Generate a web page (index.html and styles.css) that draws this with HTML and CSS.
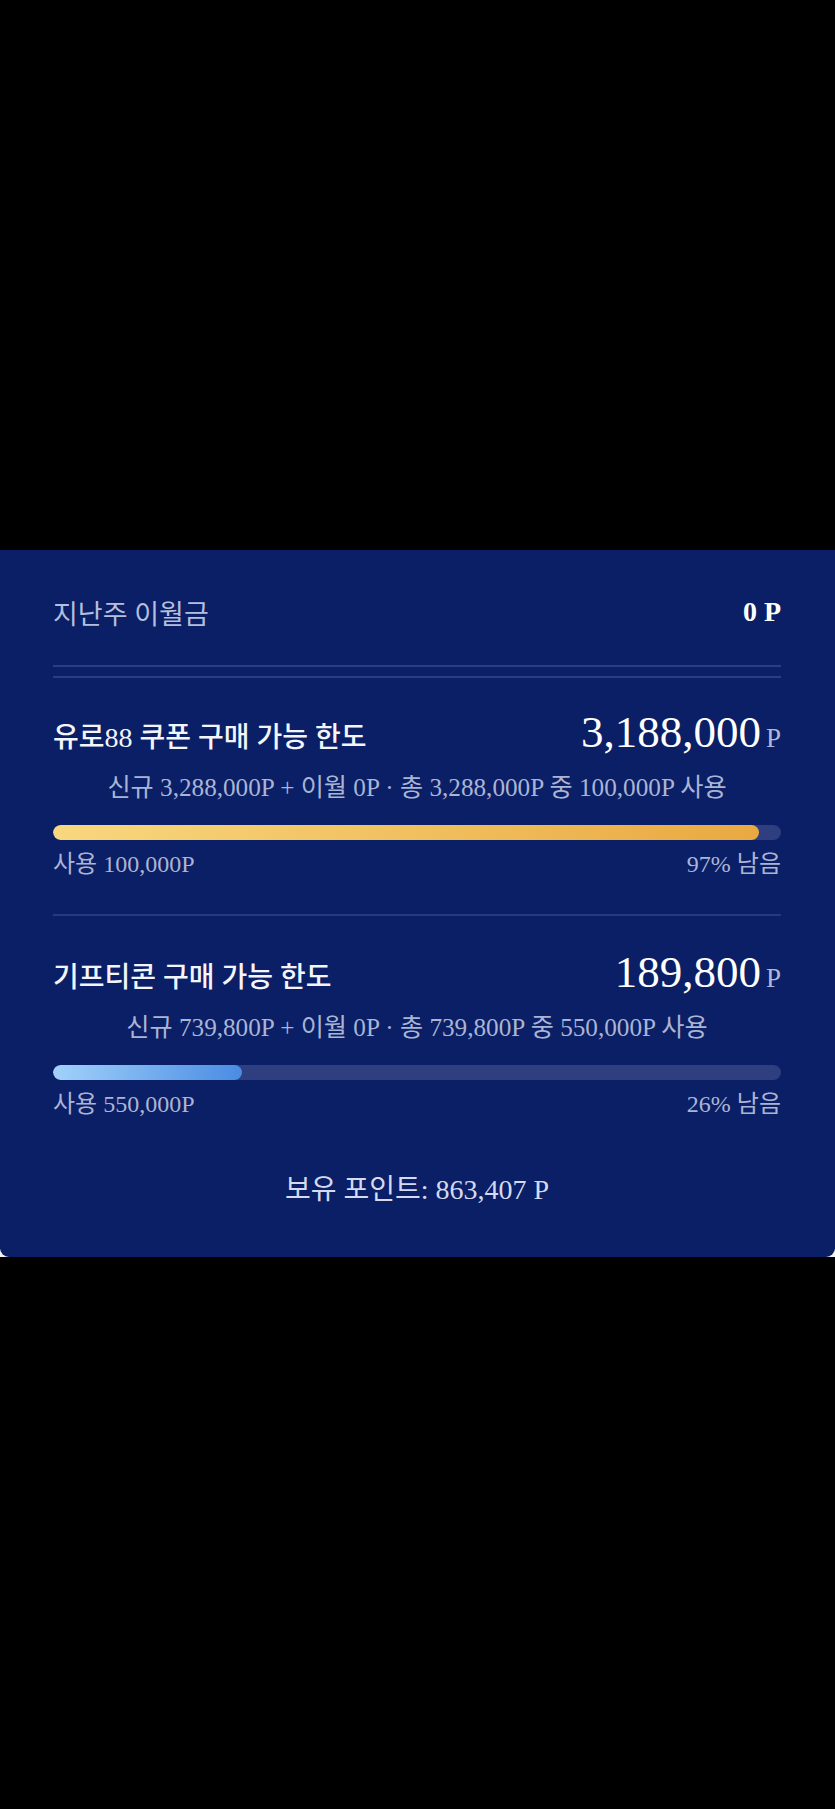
FILE: index.html
```html
<!DOCTYPE html>
<html lang="ko">
<head>
<meta charset="utf-8">
<title>포인트 한도</title>
<link rel="stylesheet" href="styles.css">
</head>
<body>
<div class="backdrop"></div>
<div class="sheet-wrap">
  <section class="card">
    <div class="carry">
      <span class="carry-label">지난주 이월금</span>
      <span class="carry-value">0 P</span>
    </div>
    <div class="double-rule"></div>

    <div class="limit">
      <div class="limit-head">
        <span class="limit-title">유로88 쿠폰 구매 가능 한도</span>
        <span class="limit-amount">3,188,000<span class="unit">P</span></span>
      </div>
      <div class="limit-detail">신규 3,288,000P + 이월 0P · 총 3,288,000P 중 100,000P 사용</div>
      <div class="bar"><div class="fill fill-gold" style="width:97%"></div></div>
      <div class="bar-labels">
        <span>사용 100,000P</span>
        <span>97% 남음</span>
      </div>
    </div>

    <div class="rule"></div>

    <div class="limit">
      <div class="limit-head">
        <span class="limit-title">기프티콘 구매 가능 한도</span>
        <span class="limit-amount">189,800<span class="unit">P</span></span>
      </div>
      <div class="limit-detail">신규 739,800P + 이월 0P · 총 739,800P 중 550,000P 사용</div>
      <div class="bar"><div class="fill fill-blue" style="width:26%"></div></div>
      <div class="bar-labels">
        <span>사용 550,000P</span>
        <span>26% 남음</span>
      </div>
    </div>

    <div class="balance">보유 포인트: 863,407 P</div>
  </section>
</div>
</body>
</html>
```
FILE: styles.css
```css
html, body {
  margin: 0;
  padding: 0;
  background: #000;
}

body {
  font-family: "Liberation Serif", "Noto Sans CJK KR", serif;
  min-height: 1809px;
}

.backdrop {
  height: 550px;
}

.sheet-wrap {
  background: linear-gradient(to bottom, transparent calc(100% - 8px), #f2f2f2 calc(100% - 8px));
}

.card {
  background: #0a1f65;
  border-radius: 0 0 9px 9px;
  padding: 42px 54px 51px 53px;
  color: #fff;
}

.carry {
  display: flex;
  justify-content: space-between;
  align-items: center;
  height: 40px;
}

.carry-label {
  font-size: 27px;
  font-weight: 400;
  color: #b4bedd;
}

.carry-value {
  font-size: 28px;
  font-weight: bold;
  color: #fff;
}

.double-rule {
  margin-top: 33px;
  height: 9px;
  border-top: 2px solid #2b3e84;
  border-bottom: 2px solid #2b3e84;
}

.limit-head {
  margin-top: 35px;
  height: 44px;
  display: flex;
  justify-content: space-between;
  align-items: center;
}

.limit-title {
  font-size: 28px;
  font-weight: 500;
  color: #f3f5fb;
}

.limit-amount {
  font-size: 45px;
  line-height: 44px;
  color: #fff;
}

.unit {
  font-size: 27px;
  color: #aeb8d8;
  margin-left: 5px;
}

.limit-detail {
  margin-top: 16px;
  line-height: 30px;
  font-size: 25.2px;
  color: #aab4d4;
  text-align: center;
}

.bar {
  margin-top: 22px;
  height: 15px;
  border-radius: 8px;
  background: #2e3e7e;
  overflow: hidden;
}

.fill {
  height: 100%;
  border-radius: 8px;
}

.fill-gold {
  background: linear-gradient(to right, #f8d77e, #e9a941);
}

.fill-blue {
  background: linear-gradient(to right, #a2d2fb, #4a8ce3);
}

.bar-labels {
  margin-top: 10px;
  line-height: 28px;
  display: flex;
  justify-content: space-between;
  font-size: 24px;
  color: #aab4d4;
}

.rule {
  margin-top: 36px;
  height: 2px;
  background: #263a80;
}

.rule + .limit .limit-head {
  margin-top: 37px;
}

.balance {
  margin-top: 56px;
  line-height: 32px;
  font-size: 28px;
  color: #d4daef;
  text-align: center;
}
```
